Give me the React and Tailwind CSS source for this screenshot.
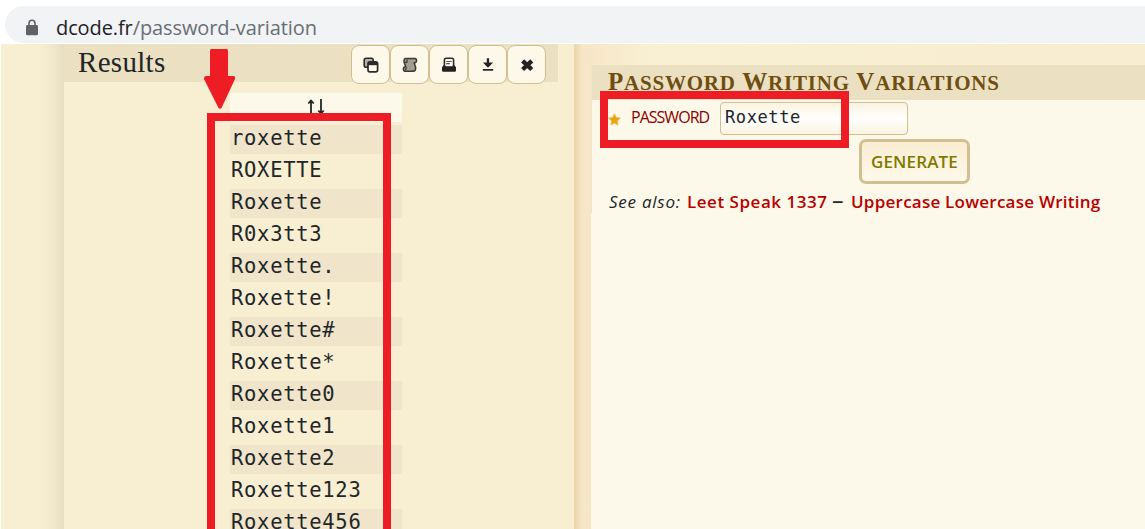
import React from "react";

const results = [
  "roxette", "ROXETTE", "Roxette", "R0x3tt3", "Roxette.", "Roxette!", "Roxette#",
  "Roxette*", "Roxette0", "Roxette1", "Roxette2", "Roxette123", "Roxette456",
];

const CopyIcon = () => (
  <svg width="16" height="16" viewBox="0 0 16 16" fill="none" stroke="#2b2b2b">
    <rect x="1.2" y="1.2" width="9" height="9" rx="2" fill="#b5b2a8" strokeWidth="1.600" />
    <rect x="5" y="4.800" width="9.600" height="10" rx="1.800" fill="#fdf9ea" strokeWidth="1.700" />
    <path d="M5 6.600h9.600" strokeWidth="3.200" />
  </svg>
);

const ScrollIcon = () => (
  <svg width="16" height="16" viewBox="0 0 16 16" stroke="#3a3935" strokeWidth="1.500" strokeLinejoin="round">
    <path d="M3.500 1.500h9.700c1.800.3 1.900 3.700 0 4.200h-1c-.2 1.800 1.500 3 1.500 5.200 0 2-1 3.300-2.600 3.300H2.700c-1.900-.4-1.800-3.900 0-4.200h1C4 8.300 2 6.900 2 4.400c0-1.800.5-2.900 1.500-2.900z" fill="#a19e94" />
    <path d="M3 5.300h2V2.500M3.200 13.500l1.500-3" fill="none" strokeWidth="1.200" />
  </svg>
);

const PrintIcon = () => (
  <svg width="16" height="16" viewBox="0 0 16 16">
    <path d="M3.400 10V3.200c0-1.300.5-1.900 1.700-1.900h5.800c1.200 0 1.700.6 1.700 1.900V10" fill="#fdf9ea" stroke="#2b2b2b" strokeWidth="1.600" />
    <path d="M5.200 4.500h5.600M5.200 6.700h3.600" stroke="#55524b" strokeWidth="1.200" />
    <path d="M2.600 8.300h1.500l.4 1h7l.4-1h1.500L15 10.300v2.900c0 1.100-.6 1.600-1.800 1.600H2.800C1.600 14.800 1 14.300 1 13.200v-2.900z" fill="#222" />
  </svg>
);

const DownloadIcon = () => (
  <svg width="16" height="16" viewBox="0 0 16 16" fill="#222">
    <path d="M6.800 1.200h2.300V5.500h4L8 10.800 2.900 5.500h3.900z" />
    <path d="M2.800 12h10.400v1.700H2.800z" />
  </svg>
);

const CloseIcon = () => (
  <svg width="16" height="16" viewBox="0 0 16 16" stroke="#222" strokeWidth="4.400">
    <path d="M3.600 3.800l9.200 8.700M12.800 3.800l-9.200 8.700" />
  </svg>
);

const tools = [CopyIcon, ScrollIcon, PrintIcon, DownloadIcon, CloseIcon];

function AddressBar() {
  return (
    <header className="h-11 shrink-0 bg-white pt-1.5 pl-[5px]">
      <div className="flex h-[37px] items-center rounded-l-full bg-[#f1f3f4] pl-[20px]">
        <svg width="14" height="17" viewBox="0 0 14 17" className="mt-[6px]">
          <path d="M4 7V4.300a3 3 0 0 1 6 0V7" fill="none" stroke="#5f6368" strokeWidth="1.600" />
          <rect x="1" y="6" width="12" height="10.300" rx="1.400" fill="#5f6368" />
        </svg>
        <div className="mt-[6px] ml-[17px] font-['Open_Sans','Noto_Sans',sans-serif] text-[20px] leading-7 tracking-[-0.1px] whitespace-nowrap text-[#6a6e73]">
          <span className="text-[#202124]">dcode.fr</span>/password-variation
        </div>
      </div>
    </header>
  );
}

function ResultsPanel() {
  return (
    <section className="w-[510px] shrink-0 bg-[#f8eed2]">
      <div className="flex h-[38px] w-[494px] justify-between bg-[#ebe0c2] pr-[12px] pl-[14px]">
        <h2 className="font-['Liberation_Serif',serif] text-[29px] leading-[36px] tracking-[0.3px] text-[#212529]">Results</h2>
        <div className="flex pt-px">
          {tools.map((Icon, i) => (
            <button key={i} className="flex h-[39px] w-[39px] items-center justify-center rounded-[8px] border border-[#d2bf91] bg-[#fdf9ea]">
              <Icon />
            </button>
          ))}
        </div>
      </div>
      <div className="mt-[11px] ml-[166px] flex w-[172px] flex-col gap-[3px] font-['DejaVu_Sans_Mono',monospace] text-[20.500px] tracking-[0.7px] text-[#212529]">
        <div className="flex h-[29px] items-center justify-center bg-[#fdf9ea]">
          <svg width="20" height="18" viewBox="0 0 20 18" fill="none" stroke="#212529" strokeWidth="1.800">
            <path d="M5 17V2M2.300 4.500L5 1.500l2.700 3M15 0v14M12.300 11.500L15 14.500l2.700-3" />
          </svg>
        </div>
        {results.map((r) => (
          <div key={r} className="h-[29px] pl-px leading-[26px] odd:bg-transparent even:bg-[#f0e5ca]">{r}</div>
        ))}
      </div>
    </section>
  );
}

function GeneratorPanel() {
  return (
    <section className="flex min-w-0 grow flex-col bg-[#fdf9ea] font-['Open_Sans','Noto_Sans',sans-serif]">
      <div className="h-[21px] shrink-0 bg-linear-to-r from-[#f7e7c8] via-[#f9efd2] via-10% to-[#f8edd0]" />
      <div className="h-[148px] shrink-0 border-l border-[#f3e4c8]">
        <h1 className="h-[35px] bg-[#ebe0c2] pl-[16px] font-['Liberation_Serif',serif] text-[25px] leading-[33px] font-bold tracking-[0.78px] whitespace-nowrap text-[#6f4f10]">
          P<span className="text-[21px]">ASSWORD</span> W<span className="text-[21px]">RITING</span> V<span className="text-[21px]">ARIATIONS</span>
        </h1>
        <div className="flex pt-[2px] pl-[16px]">
          <svg width="13" height="13" viewBox="0 0 13 13" className="mt-[11px]">
            <path d="M6.500.8l1.800 3.700 4.100.6-3 2.900.7 4.100-3.600-1.900-3.600 1.900.7-4.100-3-2.900 4.100-.6z" fill="#e6a411" stroke="#efbd4e" strokeWidth=".8" />
          </svg>
          <label className="ml-[10px] w-[89px] text-[16px] leading-[31px] tracking-[-0.98px] text-[#8b0000]">PASSWORD</label>
          <div className="h-[33px] w-[188px] rounded-[4px] border border-[#d2bf91] bg-linear-to-b from-[#fbf3df] via-white via-50% to-[#fbf3df] pl-[4px] font-['DejaVu_Sans_Mono',monospace] text-[17px] leading-[28px] tracking-[0.6px] text-[#212529]">Roxette</div>
        </div>
        <button className="mt-[4px] ml-[267px] block h-[45px] w-[111px] rounded-[7px] border-3 border-[#d2bf91] bg-linear-to-b from-[#f9edd2] to-[#fdf9ea] text-[17px] leading-[38px] font-semibold tracking-[0.15px] text-[#7e7a00]">GENERATE</button>
        <p className="mt-[4px] flex pl-[17px] text-[17px] leading-[27px] whitespace-nowrap text-[#212529]">
          <i className="w-[78px] tracking-[0.75px]">See also:</i>
          <b className="w-[145px] font-semibold tracking-[0.53px] text-[#b90000]">Leet Speak 1337</b>
          <b className="w-[19px] text-[23px] leading-[25px] font-normal">–</b>
          <b className="font-semibold tracking-[0.24px] text-[#b90000]">Uppercase Lowercase Writing</b>
        </p>
      </div>
    </section>
  );
}

export default function App() {
  return (
    <div className="relative flex h-[529px] w-[1145px] flex-col overflow-hidden bg-white">
      <AddressBar />
      <main className="flex min-h-0 grow overflow-hidden pl-px">
        <div className="w-[63px] shrink-0 bg-linear-to-r from-[#f8eed2] from-60% via-[#f0e6ca] via-85% to-[#e6dec2]" />
        <ResultsPanel />
        <div className="w-[17px] shrink-0 bg-linear-to-r from-[#ead4a8] via-[#f7e7c8] via-50% to-[#f6e5c6]" />
        <GeneratorPanel />
      </main>
      <div className="absolute top-[113px] left-[207px] h-[430px] w-[184px] border-8 border-[#ee1c24]" />
      <div className="absolute top-[91px] left-[600px] h-[57px] w-[249px] border-8 border-[#ee1c24]" />
      <svg className="absolute top-[49px] left-[204px]" width="31" height="60" viewBox="0 0 31 60">
        <path d="M7.500 0h15q1.500 0 1.500 1.500V27h5.500q2 0 1.500 3L17.500 59q-1.500 1.500-3 0L0 30q0-3 2-3h4V1.500Q6 0 7.500 0z" fill="#ee1c24" />
      </svg>
    </div>
  );
}
